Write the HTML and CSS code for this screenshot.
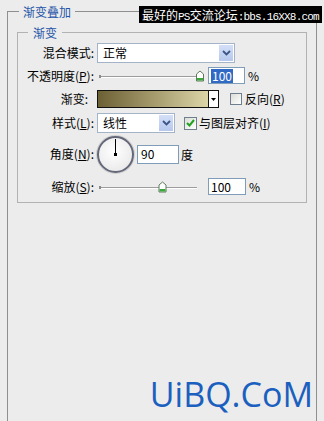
FILE: index.html
```html
<!DOCTYPE html>
<html lang="zh-CN">
  <head>
    <meta charset="UTF-8" />
    <meta name="viewport" content="width=device-width, initial-scale=1.0" />
    <title>渐变叠加</title>
    <link rel="stylesheet" href="styles.css">
  </head>
  <body>
    <fieldset class="panel">
      <legend class="panel-title">渐变叠加</legend>
      <fieldset class="group">
        <legend class="group-title">渐变</legend>

        <div class="row row-blend">
          <span class="label">混合模式:</span>
          <div class="select select-wide">
            <span class="select-text">正常</span>
            <span class="select-btn">
              <svg width="9" height="6" viewBox="0 0 9 6"><path d="M1 1 L4.5 4.5 L8 1" fill="none" stroke="#3c5584" stroke-width="1.8"/></svg>
            </span>
          </div>
        </div>

        <div class="row row-opacity">
          <span class="label">不透明度(<u>P</u>):</span>
          <svg class="slider" width="109" height="12" viewBox="0 0 109 12">
            <line x1="3" y1="6.5" x2="100" y2="6.5" stroke="#9d9d9d"/>
            <line x1="3" y1="7.5" x2="100" y2="7.5" stroke="#ffffff"/>
            <rect x="2" y="5" width="2" height="3" fill="#8a8a8a"/>
            <polygon points="103,1 106.5,4 106.5,11 99.5,11 99.5,4" fill="#ffffff" stroke="#5f7a5f"/>
            <rect x="100" y="8" width="6" height="2.5" fill="#3aa83a"/>
          </svg>
          <span class="field field-pct"><span class="selected">100</span></span>
          <span class="unit">%</span>
        </div>

        <div class="row row-gradient">
          <span class="label label-short">渐变:</span>
          <div class="gradient">
            <span class="gradient-fill"></span>
            <span class="gradient-btn">
              <svg width="5" height="3" viewBox="0 0 5 3"><path d="M0 0 H5 L2.5 3 Z" fill="#000"/></svg>
            </span>
          </div>
          <span class="check check-gap"></span>
          <span class="check-label">反向(<u>R</u>)</span>
        </div>

        <div class="row row-style">
          <span class="label">样式(<u>L</u>):</span>
          <div class="select select-narrow">
            <span class="select-text">线性</span>
            <span class="select-btn">
              <svg width="9" height="6" viewBox="0 0 9 6"><path d="M1 1 L4.5 4.5 L8 1" fill="none" stroke="#3c5584" stroke-width="1.8"/></svg>
            </span>
          </div>
          <span class="check check-on">
            <svg width="9" height="8" viewBox="0 0 9 8"><path d="M1 4 L3.5 6.5 L8 1" fill="none" stroke="#21a121" stroke-width="2"/></svg>
          </span>
          <span class="check-label">与图层对齐(<u>I</u>)</span>
        </div>

        <div class="row row-angle">
          <span class="label">角度(<u>N</u>):</span>
          <span class="dial">
            <span class="dial-hand"></span>
            <span class="dial-dot"></span>
          </span>
          <span class="field field-angle">90</span>
          <span class="unit">度</span>
        </div>

        <div class="row row-scale">
          <span class="label">缩放(<u>S</u>):</span>
          <svg class="slider" width="109" height="12" viewBox="0 0 109 12">
            <line x1="3" y1="6.5" x2="100" y2="6.5" stroke="#9d9d9d"/>
            <line x1="3" y1="7.5" x2="100" y2="7.5" stroke="#ffffff"/>
            <rect x="2" y="5" width="2" height="3" fill="#8a8a8a"/>
            <polygon points="65.5,1 69,4 69,11 62,11 62,4" fill="#ffffff" stroke="#5f7a5f"/>
            <rect x="62.5" y="8" width="6" height="2.5" fill="#3aa83a"/>
          </svg>
          <span class="field field-pct">100</span>
          <span class="unit">%</span>
        </div>
      </fieldset>

      <div class="brand">UiBQ.CoM</div>
    </fieldset>

    <div class="watermark">最好的<span class="latin">PS</span>交流论坛<span class="latin">:bbs.16XX8.com</span></div>
  </body>
</html>
```

FILE: styles.css
```css
* {
  box-sizing: border-box;
}
html,
body {
  margin: 0;
  padding: 0;
  height: 100%;
  overflow: hidden;
}
body {
  font-family: "Noto Sans CJK SC", "Noto Sans", sans-serif;
  font-size: 12px;
  color: #000;
  background: #ececec;
  position: relative;
}
u {
  text-decoration: underline;
  text-underline-offset: 1px;
}
.panel {
  margin: 4px 7px 0;
  padding: 6px 9px 0;
  border: 1px solid #8f8f8f;
  border-bottom: none;
  min-height: 430px;
}
.panel-title,
.group-title {
  color: #1f55a8;
  line-height: 15px;
  font-size: 12px;
}
.panel-title {
  padding: 0 4px;
  margin-left: 2px;
}
.group {
  margin: 0;
  padding: 2px 0 2px;
  border: 1px solid #b2b2b2;
}
.group-title {
  padding: 0 5px;
  margin-left: 10px;
}
.row {
  display: flex;
  align-items: center;
}
.row-blend { height: 22px; }
.row-opacity { height: 23px; }
.row-gradient { height: 24px; }
.row-style { height: 24px; }
.row-angle { height: 38px; }
.row-scale { height: 27px; }
.label {
  width: 76px;
  margin-right: 3px;
  text-align: right;
  white-space: nowrap;
  line-height: 14px;
}
.label-short {
  padding-right: 6px;
}
.select {
  display: flex;
  height: 20px;
  background: #fff;
  border: 1px solid #a5b3c8;
}
.select-wide { width: 138px; }
.select-narrow { width: 78px; }
.select-text {
  flex: 1;
  padding-left: 5px;
  line-height: 18px;
}
.select-btn {
  width: 16px;
  display: flex;
  align-items: center;
  justify-content: center;
  background: linear-gradient(#d4e0f8, #b6c8ee);
  border: 1px solid #fff;
}
.slider {
  display: block;
  margin-right: 2px;
}
.field {
  display: flex;
  align-items: center;
  height: 17px;
  padding-left: 2px;
  background: #fff;
  border: 1px solid #7f9db9;
  line-height: 14px;
}
.field-pct { width: 37px; }
.row-scale .field-pct { width: 38px; }
.field-angle {
  width: 42px;
  height: 19px;
  margin-left: 3px;
  padding-left: 3px;
}
.selected {
  background: #316ac5;
  color: #fff;
  padding: 0 1px;
}
.unit {
  margin-left: 3px;
}
.row-angle .unit {
  margin-left: 2px;
}
.gradient {
  display: flex;
  width: 122px;
  height: 18px;
  border: 1px solid #111;
  background: #fff;
}
.gradient-fill {
  flex: 1;
  border-right: 1px solid #111;
  background: linear-gradient(to right, #6c6035, #a49a6c 50%, #dbd5a8);
}
.gradient-btn {
  width: 9px;
  display: flex;
  align-items: center;
  justify-content: center;
}
.check {
  width: 12px;
  height: 12px;
  border: 1px solid #6f7f90;
  background: linear-gradient(135deg, #dcdcd6, #ffffff);
  display: flex;
  align-items: center;
  justify-content: center;
}
.check-gap {
  margin-left: 11px;
}
.check-on {
  width: 13px;
  height: 13px;
  margin-left: 9px;
}
.check-label {
  margin-left: 3px;
  line-height: 14px;
}
.row-style .check-label {
  margin-left: 2px;
}
.dial {
  position: relative;
  width: 37px;
  height: 37px;
  border-radius: 50%;
  border: 2px solid #646878;
  background: radial-gradient(circle at 45% 40%, #ffffff, #ececec 70%, #d8d8d8);
  box-shadow: 0 0 0 1px #d0d0d0;
}
.dial-hand {
  position: absolute;
  left: 16px;
  top: 1px;
  width: 1px;
  height: 16px;
  background: #000;
}
.dial-dot {
  position: absolute;
  left: 15px;
  top: 15px;
  width: 3px;
  height: 3px;
  background: #000;
}
.brand {
  margin: 171px -6px 0 0;
  text-align: right;
  font-family: "Open Sans", sans-serif;
  font-size: 34px;
  line-height: 40px;
  color: #1b5fbf;
}
.watermark {
  position: absolute;
  top: 6px;
  left: 139px;
  height: 17px;
  padding: 0 3px;
  background: #000;
  color: #fff;
  font-size: 12px;
  line-height: 17px;
  white-space: nowrap;
}
.watermark .latin {
  font-family: "Liberation Mono", monospace;
  font-size: 11px;
  letter-spacing: -0.8px;
}
```
